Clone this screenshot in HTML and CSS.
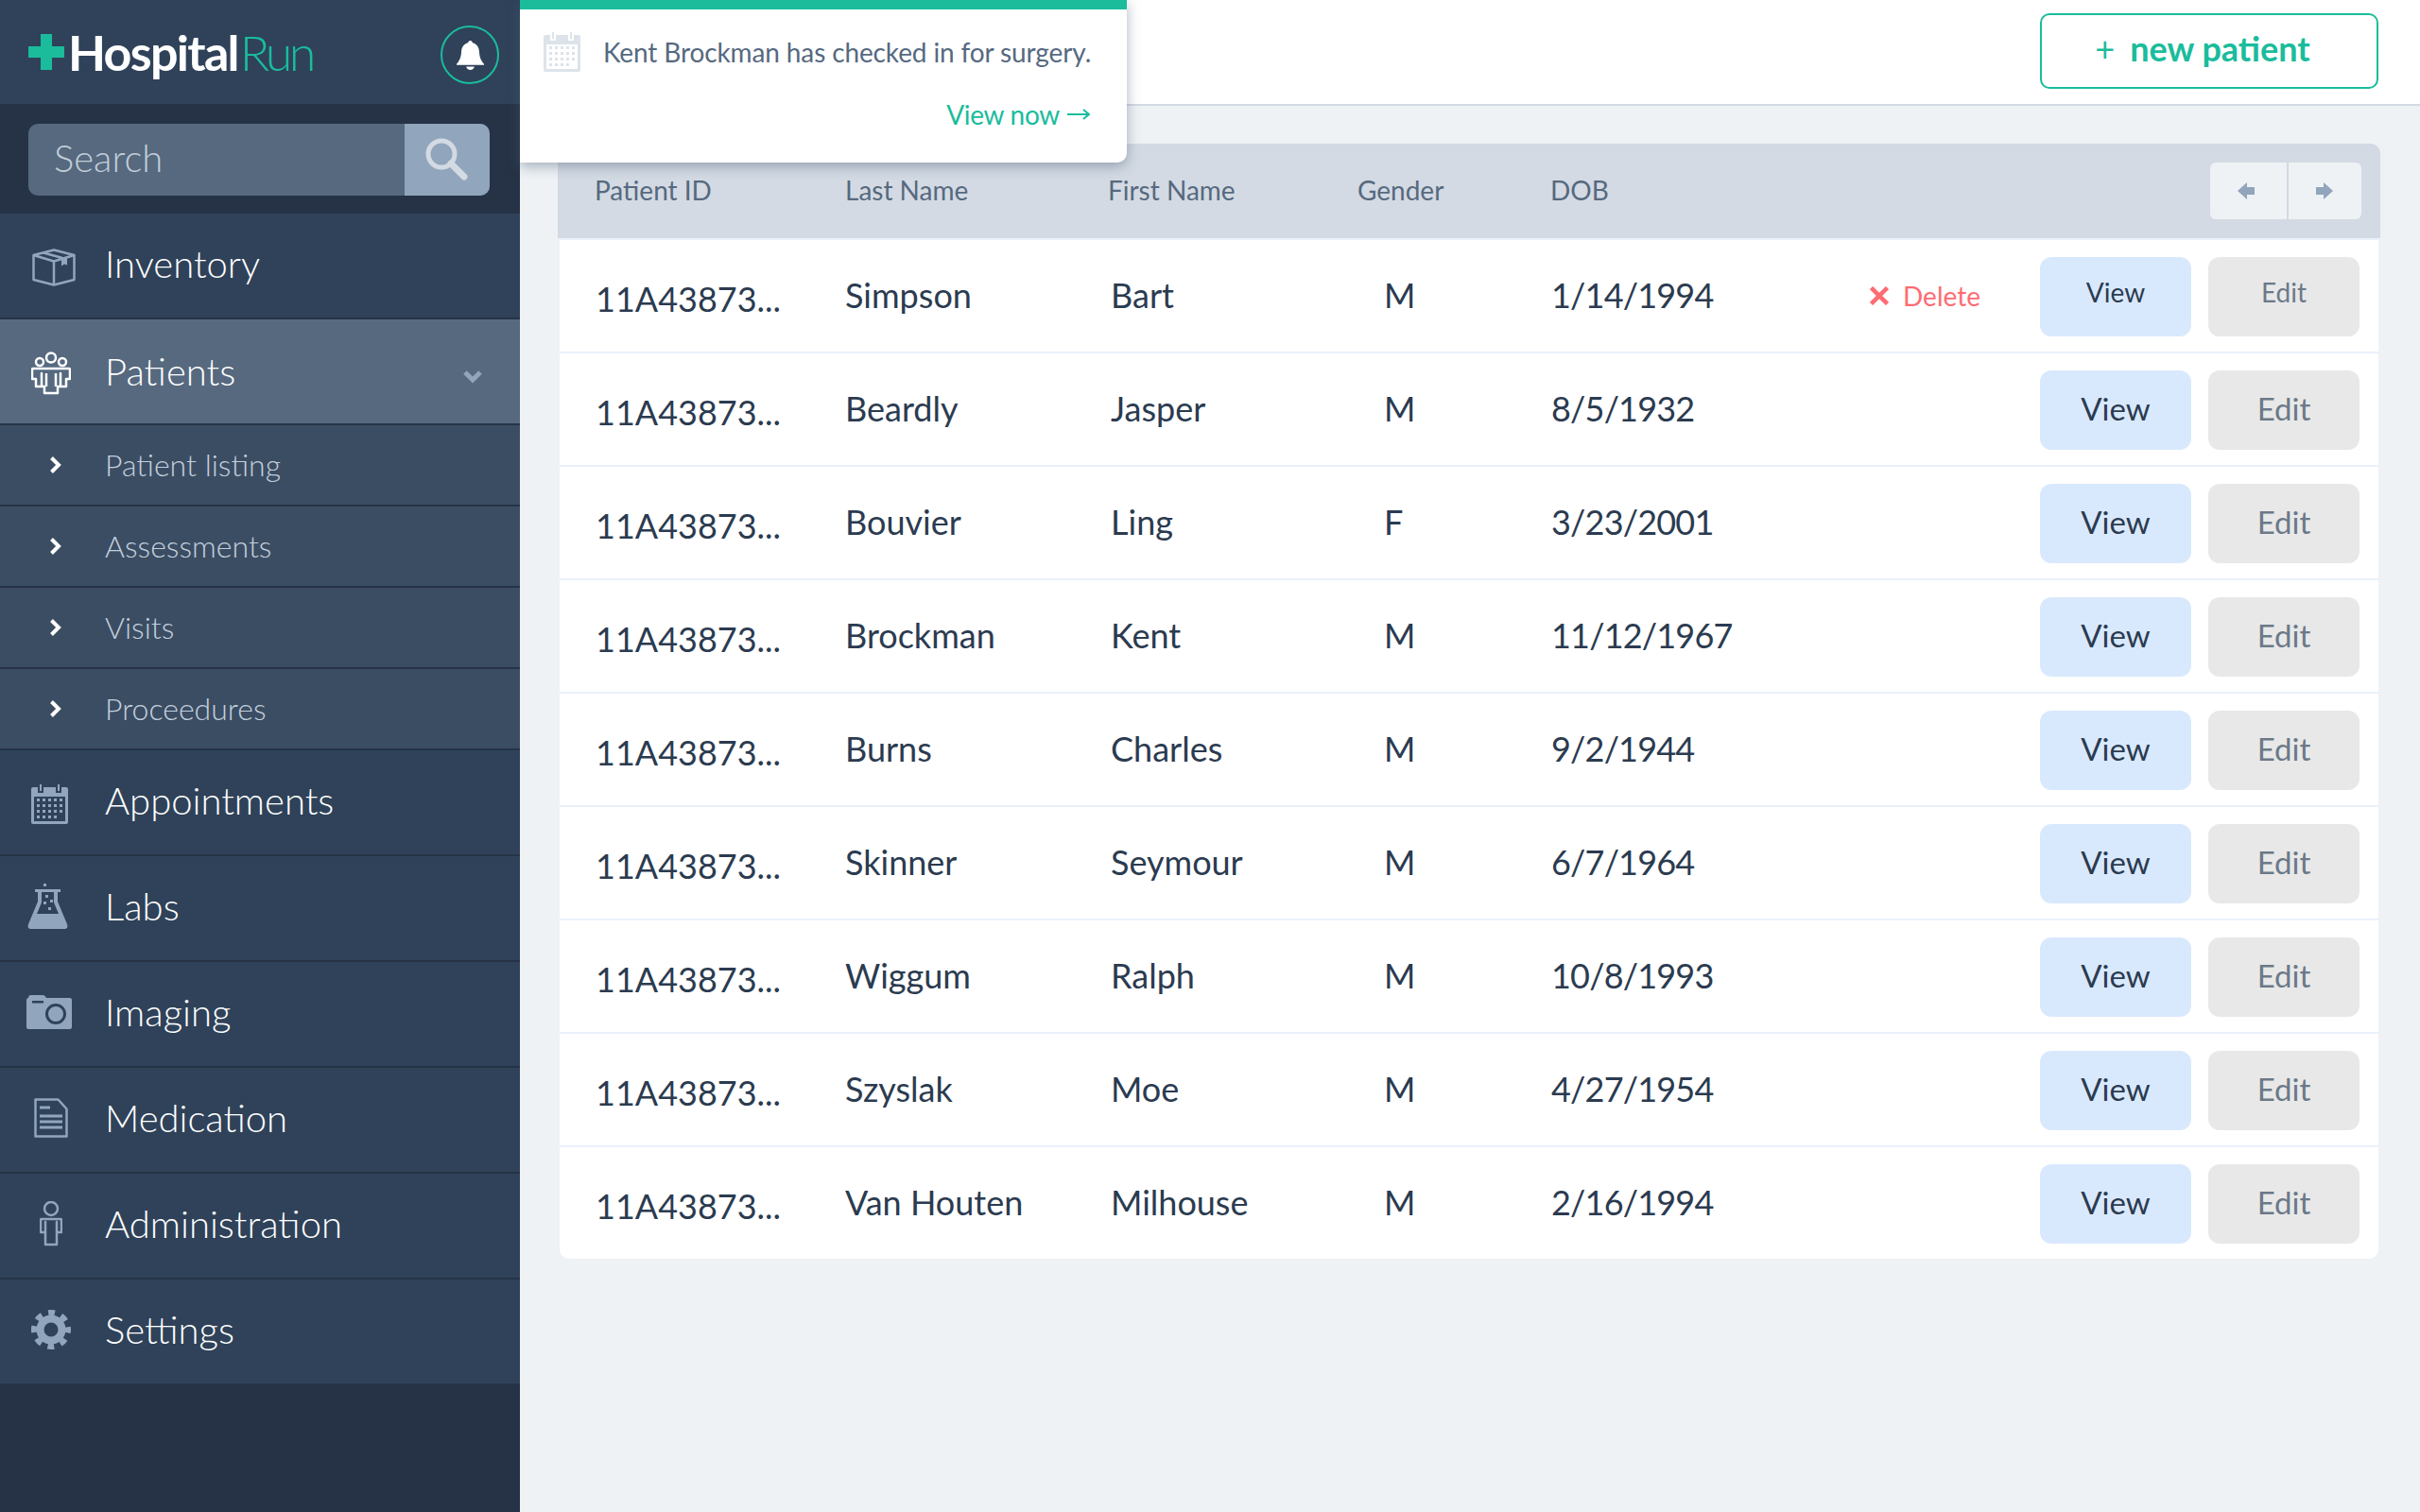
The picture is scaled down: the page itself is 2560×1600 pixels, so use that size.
FILE: index.html
```html
<!DOCTYPE html>
<html lang="en">
  <head>
    <meta charset="UTF-8" />
    <title>HospitalRun - Patients</title>
    <link rel="stylesheet" href="styles.css">
  </head>
  <body>
    <svg class="sprite" width="0" height="0">
      <symbol id="i-calendar" viewBox="0 0 39 42">
        <path fill-rule="evenodd" d="M9 0h2v7H9zM28 0h2v7h-2zM2 3h5v6h6V3h13v6h6V3h5a2 2 0 0 1 2 2v35a2 2 0 0 1-2 2H2a2 2 0 0 1-2-2V5a2 2 0 0 1 2-2zM3 13v26h33V13z" />
        <path d="M6 15h3v3H6zM12 15h3v3h-3zM18 15h3v3h-3zM24 15h3v3h-3zM30 15h3v3h-3zM6 21h3v3H6zM12 21h3v3h-3zM18 21h3v3h-3zM24 21h3v3h-3zM30 21h3v3h-3zM6 27h3v3H6zM12 27h3v3h-3zM18 27h3v3h-3zM24 27h3v3h-3zM30 27h3v3h-3zM6 33h3v3H6zM12 33h3v3h-3zM18 33h3v3h-3zM24 33h3v3h-3z" />
      </symbol>
    </svg>

    <aside class="sidebar">
      <header class="brand">
        <div class="logo">
          <svg class="logo-cross" viewBox="0 0 38 38"><path d="M13 0h12v13h13v12H25v13H13V25H0V13h13z" /></svg>
          <span class="logo-bold">Hospital</span><span class="logo-light">Run</span>
        </div>
        <div class="bell">
          <svg viewBox="0 0 30 32" width="29" height="31"><path d="M15 0c1.500 0 2.200 1 2.400 2.200C22 3.400 24.500 7 24.800 12c.3 5 1.200 9 5.200 13.500v1H0v-1C4 21 4.900 17 5.200 12 5.500 7 8 3.400 12.600 2.200 12.800 1 13.500 0 15 0z" /><path d="M10.500 28.500h9C19 30.800 17.200 32 15 32s-4-1.200-4.500-3.500z" /></svg>
        </div>
      </header>

      <div class="search-band">
        <div class="search">
          <span class="search-text">Search</span>
          <span class="search-btn">
            <svg viewBox="0 0 48 48" width="48" height="48"><circle cx="18" cy="18" r="14" fill="none" stroke="#d3dae3" stroke-width="5" /><path d="M28 28l14 14" stroke="#d3dae3" stroke-width="7" stroke-linecap="round" /></svg>
          </span>
        </div>
      </div>

      <nav>
        <a class="nav-item">
          <span class="nav-icon">
            <svg class="ic-box" viewBox="0 0 46 40" width="46" height="40" fill="none" stroke="currentColor" stroke-width="2.500" stroke-linejoin="round"><path d="M1.500 7L23 1.500 44.500 7v26L23 38.500 1.500 33z" /><path d="M1.500 7L23 13.500 44.500 7M23 13.500v25M12 4.500l20 5.500" /><path d="M31 10l6-1.500v9l-3-1-3 2z" fill="currentColor" stroke="none" /></svg>
          </span>
          <span class="nav-label">Inventory</span>
        </a>
        <a class="nav-item active">
          <span class="nav-icon">
            <svg class="ic-down" viewBox="0 0 42 46" width="42" height="46" fill="none" stroke="currentColor" stroke-width="2.500" stroke-linejoin="round"><circle cx="21" cy="6.500" r="5" /><circle cx="9" cy="11" r="4" /><circle cx="33" cy="11" r="4" /><path d="M2 18h38a1 1 0 0 1 1 1v10h-4v8h-6v-14 14h-3v7H14v-7h-3V23v14H5v-8H1V19a1 1 0 0 1 1-1zM16 23v14M26 23v14" /></svg>
          </span>
          <span>Patients</span>
          <svg class="nav-caret" viewBox="0 0 20 14" width="20" height="14"><path d="M2 2l8 8 8-8" fill="none" stroke="#91a5bc" stroke-width="5" /></svg>
        </a>
        <ul class="subnav">
          <li><svg viewBox="0 0 13 20" width="13" height="20"><path d="M2.500 2.500l7.500 7.500-7.500 7.500" fill="none" stroke="#fff" stroke-width="4" /></svg><span>Patient listing</span></li>
          <li><svg viewBox="0 0 13 20" width="13" height="20"><path d="M2.500 2.500l7.500 7.500-7.500 7.500" fill="none" stroke="#fff" stroke-width="4" /></svg><span>Assessments</span></li>
          <li><svg viewBox="0 0 13 20" width="13" height="20"><path d="M2.500 2.500l7.500 7.500-7.500 7.500" fill="none" stroke="#fff" stroke-width="4" /></svg><span>Visits</span></li>
          <li><svg viewBox="0 0 13 20" width="13" height="20"><path d="M2.500 2.500l7.500 7.500-7.500 7.500" fill="none" stroke="#fff" stroke-width="4" /></svg><span>Proceedures</span></li>
        </ul>
        <a class="nav-item">
          <span class="nav-icon"><svg class="ic-cal" width="39" height="42" fill="currentColor"><use href="#i-calendar" /></svg></span>
          <span class="nav-label">Appointments</span>
        </a>
        <a class="nav-item">
          <span class="nav-icon">
            <svg class="ic-flask" viewBox="0 0 43 48" width="43" height="48" fill="currentColor"><path d="M17 0h3v3h-3zM8 6h27v3h-3v10l10 24c1 3 0 5-3 5H4c-3 0-4-2-3-5l10-24V9H8z" /><path d="M15 9v11L10 32h23l-5-12V9z" fill="#2f4259" /><path d="M19 12h3v3h-3zM24 17h3v3h-3zM17 19h3v3h-3zM22 25h3v3h-3z" /></svg>
          </span>
          <span class="nav-label">Labs</span>
        </a>
        <a class="nav-item">
          <span class="nav-icon">
            <svg class="ic-cam" viewBox="0 0 48 36" width="48" height="36" fill="currentColor"><path d="M2 3c0-2 1-3 3-3h12c2 0 3 1 4 3h25c1 0 2 1 2 2v29c0 1-1 2-2 2H2c-1 0-2-1-2-2V5c0-1 1-2 2-2z" /><rect x="6" y="6" width="12" height="2.500" fill="#2f4259" /><circle cx="31" cy="20" r="9.500" fill="none" stroke="#2f4259" stroke-width="3" /></svg>
          </span>
          <span class="nav-label">Imaging</span>
        </a>
        <a class="nav-item">
          <span class="nav-icon">
            <svg class="ic-up" viewBox="0 0 36 42" width="36" height="42" fill="none" stroke="currentColor" stroke-width="2.500" stroke-linejoin="round"><path d="M1.500 1.500h24l9 10v29h-33z" /><path d="M6 10h11M6 19h24M6 25h24M6 31h24" stroke-width="3" /></svg>
          </span>
          <span class="nav-label">Medication</span>
        </a>
        <a class="nav-item">
          <span class="nav-icon">
            <svg class="ic-up" viewBox="0 0 24 48" width="24" height="48" fill="none" stroke="currentColor" stroke-width="2.500" stroke-linejoin="round"><circle cx="12" cy="8" r="7" /><path d="M2 19h20a1 1 0 0 1 1 1v13h-5V22v24H6V22v11H1V20a1 1 0 0 1 1-1z" /></svg>
          </span>
          <span class="nav-label">Administration</span>
        </a>
        <a class="nav-item">
          <span class="nav-icon">
            <svg class="ic-up" viewBox="0 0 42 42" width="42" height="42" fill="none" stroke="currentColor"><circle cx="21" cy="21" r="11.500" stroke-width="8" /><circle cx="21" cy="21" r="18" stroke-width="6" stroke-dasharray="7 7.137" stroke-dashoffset="3.500" /></svg>
          </span>
          <span class="nav-label">Settings</span>
        </a>
      </nav>
    </aside>

    <main class="content">
      <div class="topbar">
        <button class="new-patient"><span class="new-plus">+</span>new patient</button>
      </div>

      <div class="notice">
        <div class="notice-body">
          <svg class="notice-icon" width="39" height="42" fill="currentColor"><use href="#i-calendar" /></svg>
          <span class="notice-text">Kent Brockman has checked in for surgery.</span>
        </div>
        <a class="notice-link">View now
          <svg viewBox="0 0 24 14" width="24" height="14"><path d="M0 7h22M17 2l6 5-6 5" fill="none" stroke="#1abc9c" stroke-width="2" /></svg>
        </a>
      </div>

      <section class="patients">
        <div class="table-head">
          <span>Patient ID</span>
          <span class="col-last">Last Name</span>
          <span class="col-first">First Name</span>
          <span class="col-gender">Gender</span>
          <span class="col-dob">DOB</span>
          <div class="pager">
            <button class="pager-prev"><svg viewBox="0 0 18 18" width="18" height="18"><path d="M0 9L10 0v5h8v8h-8v5z" /></svg></button>
            <button class="pager-next"><svg viewBox="0 0 18 18" width="18" height="18"><path d="M18 9L8 0v5H0v8h8v5z" /></svg></button>
          </div>
        </div>

        <div class="row first-row">
          <span class="id">11A43873...</span><span>Simpson</span><span>Bart</span><span class="gender">M</span><span class="dob">1/14/1994</span>
          <a class="delete">
            <svg viewBox="0 0 20 20" width="20" height="20"><path d="M1.500 1.500l17 17M18.500 1.500l-17 17" stroke="#ff6b73" stroke-width="4.500" /></svg>Delete
          </a>
          <button class="btn-view">View</button><button class="btn-edit">Edit</button>
        </div>
        <div class="row">
          <span class="id">11A43873...</span><span>Beardly</span><span>Jasper</span><span class="gender">M</span><span class="dob">8/5/1932</span>
          <i></i>
          <button class="btn-view">View</button><button class="btn-edit">Edit</button>
        </div>
        <div class="row">
          <span class="id">11A43873...</span><span>Bouvier</span><span>Ling</span><span class="gender">F</span><span class="dob">3/23/2001</span>
          <i></i>
          <button class="btn-view">View</button><button class="btn-edit">Edit</button>
        </div>
        <div class="row">
          <span class="id">11A43873...</span><span>Brockman</span><span>Kent</span><span class="gender">M</span><span class="dob">11/12/1967</span>
          <i></i>
          <button class="btn-view">View</button><button class="btn-edit">Edit</button>
        </div>
        <div class="row">
          <span class="id">11A43873...</span><span>Burns</span><span>Charles</span><span class="gender">M</span><span class="dob">9/2/1944</span>
          <i></i>
          <button class="btn-view">View</button><button class="btn-edit">Edit</button>
        </div>
        <div class="row">
          <span class="id">11A43873...</span><span>Skinner</span><span>Seymour</span><span class="gender">M</span><span class="dob">6/7/1964</span>
          <i></i>
          <button class="btn-view">View</button><button class="btn-edit">Edit</button>
        </div>
        <div class="row">
          <span class="id">11A43873...</span><span>Wiggum</span><span>Ralph</span><span class="gender">M</span><span class="dob">10/8/1993</span>
          <i></i>
          <button class="btn-view">View</button><button class="btn-edit">Edit</button>
        </div>
        <div class="row">
          <span class="id">11A43873...</span><span>Szyslak</span><span>Moe</span><span class="gender">M</span><span class="dob">4/27/1954</span>
          <i></i>
          <button class="btn-view">View</button><button class="btn-edit">Edit</button>
        </div>
        <div class="row">
          <span class="id">11A43873...</span><span>Van Houten</span><span>Milhouse</span><span class="gender">M</span><span class="dob">2/16/1994</span>
          <i></i>
          <button class="btn-view">View</button><button class="btn-edit">Edit</button>
        </div>
      </section>
    </main>
  </body>
</html>
```

FILE: styles.css
```css
* {
  box-sizing: border-box;
}

body {
  margin: 0;
  height: 1600px;
  overflow: hidden;
  display: flex;
  font-family: 'Lato', 'Open Sans', sans-serif;
  background-color: #eef2f5;
  color: #2b3b50;
}

.sprite {
  position: absolute;
}

/* sidebar */
.sidebar {
  width: 550px;
  flex: none;
  background-color: #263346;
}

.brand {
  height: 110px;
  padding: 27px 22px 0 30px;
  display: flex;
  justify-content: space-between;
  background-color: #2f4259;
}

.logo {
  display: flex;
  align-items: baseline;
  height: 56px;
  font-size: 52px;
  line-height: 56px;
}

.logo-cross {
  width: 38px;
  height: 38px;
  margin-right: 4px;
  align-self: center;
  fill: #1abc9c;
}

.logo-bold {
  font-weight: 700;
  color: #fff;
  letter-spacing: -1.7px;
  margin-right: 2px;
}

.logo-light {
  font-weight: 300;
  color: #1abc9c;
  letter-spacing: -3.5px;
}

.bell {
  width: 62px;
  height: 62px;
  border: 2px solid #1abc9c;
  border-radius: 50%;
  display: flex;
  align-items: center;
  justify-content: center;
  fill: #fff;
}

.search-band {
  height: 116px;
  padding: 21px 32px 19px 30px;
}

.search {
  height: 76px;
  display: flex;
  justify-content: space-between;
  border-radius: 10px;
  overflow: hidden;
  background-color: #56697f;
}

.search-text {
  padding-left: 27px;
  font-size: 40px;
  font-weight: 300;
  line-height: 72px;
  color: #c3ced9;
}

.search-btn {
  width: 90px;
  display: flex;
  align-items: center;
  justify-content: center;
  background-color: #91a5bc;
}

.nav-item {
  height: 112px;
  display: flex;
  align-items: center;
  border-bottom: 2px solid #263346;
  background-color: #2f4259;
  font-size: 40px;
  font-weight: 300;
  color: #fff;
}

.nav-item.active {
  background-color: #56697f;
}

.nav-label {
  padding-bottom: 5px;
}

.nav-icon {
  width: 108px;
  margin-right: 3px;
  display: flex;
  justify-content: center;
  color: #91a5bc;
}

.nav-item.active .nav-icon {
  color: #fff;
}

.ic-box {
  margin: 4px 0 0 5px;
}

.ic-down {
  margin-top: 4px;
}

.ic-cal {
  margin: 4px 3px 0 0;
}

.ic-flask {
  margin: 0 7px 4px 0;
}

.ic-cam {
  margin: 0 4px 4px 0;
}

.ic-up {
  margin-bottom: 4px;
}

.nav-caret {
  margin: 12px 40px 0 auto;
}

.subnav {
  list-style: none;
  margin: 0;
  padding: 0;
}

.subnav li {
  height: 86px;
  padding-left: 52px;
  display: flex;
  align-items: center;
  gap: 46px;
  border-bottom: 2px solid #263346;
  background-color: #3b4d63;
  font-size: 32px;
  font-weight: 300;
  color: #c3d0de;
}

.subnav span {
  padding-bottom: 2px;
}

/* main */
.content {
  position: relative;
  flex: 1;
}

.topbar {
  height: 112px;
  padding: 14px 44px 0 0;
  display: flex;
  justify-content: flex-end;
  border-bottom: 2px solid #d3dae3;
  background-color: #fff;
}

.new-patient {
  width: 358px;
  height: 80px;
  padding: 0 14px 6px 0;
  border: 2px solid #1abc9c;
  border-radius: 10px;
  background-color: #fff;
  font-family: inherit;
  font-size: 36px;
  font-weight: 700;
  color: #1abc9c;
}

.new-plus {
  margin-right: 16px;
  font-weight: 400;
}

.notice {
  position: absolute;
  top: 0;
  left: 0;
  width: 642px;
  height: 172px;
  padding: 34px 39px 0 25px;
  border-top: 10px solid #1abc9c;
  border-radius: 0 0 10px 0;
  background-color: #fff;
  box-shadow: 0 4px 14px rgba(70, 90, 115, 0.45);
  font-size: 28px;
  color: #56697f;
}

.notice-body {
  height: 42px;
  margin-top: -10px;
  display: flex;
  align-items: center;
  gap: 24px;
  white-space: nowrap;
}

.notice-text {
  letter-spacing: -0.12px;
}

.notice-icon {
  flex: none;
  color: #dde3ea;
}

.notice-link {
  margin-top: 28px;
  display: flex;
  justify-content: flex-end;
  align-items: center;
  gap: 8px;
  letter-spacing: -0.3px;
  color: #1abc9c;
}

.patients {
  margin: 40px 42px 0 40px;
  border-radius: 10px;
}

.table-head {
  height: 100px;
  padding: 0 20px 0 39px;
  display: flex;
  align-items: center;
  border-radius: 10px 10px 0 0;
  background-color: #d3dae3;
  font-size: 28px;
  color: #56697f;
}

.table-head span {
  display: block;
  padding-bottom: 2px;
}

.table-head > span:first-child {
  width: 265px;
}

.col-last {
  width: 278px;
}

.col-first {
  width: 264px;
}

.col-gender {
  width: 204px;
}

.pager {
  margin-left: auto;
  width: 160px;
  height: 60px;
  display: flex;
  border-radius: 6px;
  overflow: hidden;
  background-color: #d3dae3;
  gap: 2px;
}

.pager button {
  flex: 1;
  padding: 2px 0 0;
  border: none;
  background-color: #eef2f5;
  fill: #91a5bc;
}

.pager .pager-prev {
  padding-right: 6px;
}

.pager .pager-next {
  padding-right: 2px;
}

.row {
  height: 120px;
  margin: 0 2px;
  padding: 0 20px 0 38px;
  display: grid;
  grid-template-columns: 264px 281px 265px 201px 1fr 180px 160px 178px;
  align-items: center;
  border-top: 2px solid #e9f1fb;
  background-color: #fff;
  font-size: 36px;
  color: #2b3b50;
}

.row:last-child {
  border-radius: 0 0 10px 10px;
}

.row span {
  padding-bottom: 3px;
}

.row .id {
  padding: 5px 0 0;
}

.gender {
  padding-left: 24px;
}

.dob {
  letter-spacing: -0.8px;
}

.delete {
  display: flex;
  align-items: center;
  gap: 15px;
  font-size: 28px;
  color: #ff6b73;
}

.btn-view,
.btn-edit {
  width: 160px;
  height: 84px;
  margin-top: 2px;
  padding-bottom: 5px;
  border: none;
  border-radius: 12px;
  font-family: inherit;
  font-size: 33px;
}

.btn-view {
  background-color: #d9e9fd;
  color: #2b3b50;
}

.btn-edit {
  margin-left: 18px;
  background-color: #e8e8e8;
  color: #6b7988;
}

.first-row button {
  font-size: 28px;
  padding-bottom: 11px;
}
```
